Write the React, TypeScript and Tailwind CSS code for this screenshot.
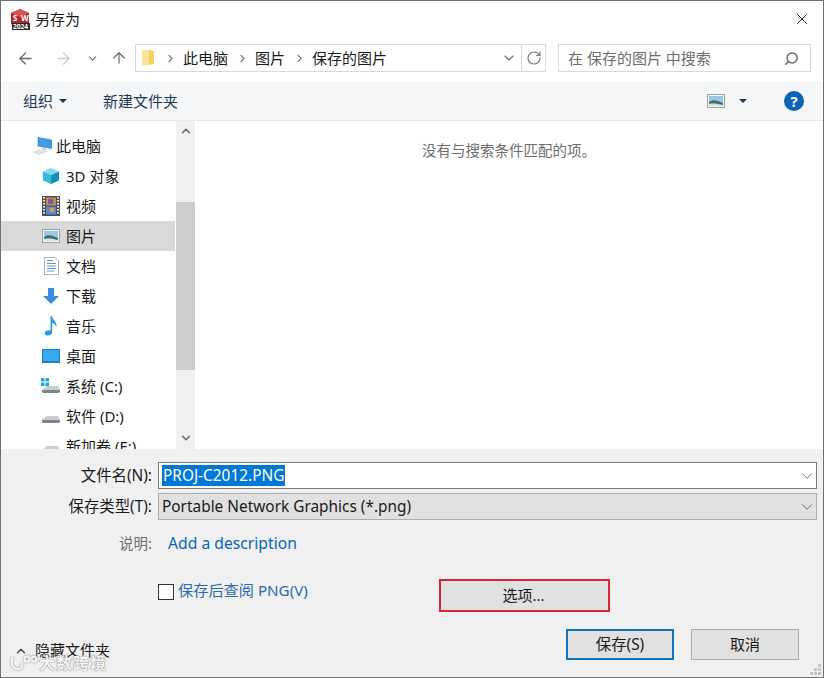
import { ArrowLeft, ArrowRight, ArrowUp, ChevronDown, ChevronRight, ChevronUp, RotateCw, Search, X } from "lucide-react";
import type { ReactNode } from "react";

const font = { fontFamily: '"Noto Sans", "Noto Sans CJK SC", sans-serif' };

function PictureIcon({ w = 18, h = 14 }: { w?: number; h?: number }) {
  return (
    <svg width={w} height={h} viewBox="0 0 18 14">
      <rect x="0.5" y="0.5" width="17" height="13" fill="#f4f6f6" stroke="#9aa3a8" />
      <rect x="2" y="2" width="14" height="10" fill="#9cc7e4" />
      <path d="M2 8 C6 5 10 6 16 9 V12 H2 Z" fill="#3f6f72" />
      <path d="M2 10 C7 9 11 10 16 11 V12 H2 Z" fill="#d5e2de" />
    </svg>
  );
}

function NavIcon({ name }: { name: string }) {
  switch (name) {
    case "pc":
      return (
        <svg width="20" height="18" viewBox="0 0 20 18">
          <path d="M6 0.5 L19.5 3 V11.5 L6 9 Z" fill="#3f9fe0" stroke="#2b7fc0" strokeWidth="0.7" />
          <path d="M10 10 L14 11 L14 13 L10 12 Z" fill="#b8c6d0" />
          <path d="M0 15 L9 12 L16 14 L7 18 Z" fill="#dfe3e6" />
        </svg>
      );
    case "3d":
      return (
        <svg width="18" height="18" viewBox="0 0 20 20">
          <path d="M10 1 L19 5 L10 9 L1 5 Z" fill="#7fdcec" />
          <path d="M1 5 L10 9 V19 L1 15 Z" fill="#37bcd6" />
          <path d="M19 5 L10 9 V19 L19 15 Z" fill="#1493b8" />
        </svg>
      );
    case "video":
      return (
        <svg width="18" height="20" viewBox="0 0 18 20">
          <rect x="0" y="0" width="18" height="20" fill="#4a4f55" />
          <rect x="4" y="1.5" width="10" height="8" fill="#c98a4e" />
          <rect x="6" y="3" width="5" height="5" fill="#7a5aa0" />
          <rect x="4" y="10.5" width="10" height="8" fill="#5a8ad0" />
          <rect x="8" y="12" width="4" height="4" fill="#c9a04e" />
          {[1, 4, 7, 10, 13, 16].map((y) => (
            <g key={y}>
              <rect x="1" y={y} width="2" height="1.6" fill="#e8e8e8" />
              <rect x="15" y={y} width="2" height="1.6" fill="#e8e8e8" />
            </g>
          ))}
        </svg>
      );
    case "pic":
      return <PictureIcon />;
    case "doc":
      return (
        <svg width="15" height="18" viewBox="0 0 15 18">
          <path d="M0.5 0.5 H11 L14.5 4 V17.5 H0.5 Z" fill="#fff" stroke="#a9b1b8" />
          <path d="M3 3.5 H9 M3 6.5 H12 M3 9 H12 M3 11.5 H12 M3 14 H10" stroke="#5f9dc8" strokeWidth="1.2" />
        </svg>
      );
    case "down":
      return (
        <svg width="18" height="18" viewBox="0 0 18 18">
          <path d="M6 1 H12 V9 H17 L9 17 L1 9 H6 Z" fill="#3a8fdc" />
        </svg>
      );
    case "music":
      return (
        <svg width="14" height="20" viewBox="0 0 14 20">
          <path d="M6.5 0 H8 C8.5 4 13 5 12.5 11 C11.5 8.5 10 7.5 8.2 7 V16 C8.2 18.5 5.5 20 3 19.5 C0.5 19 0 16.5 2 15 C3.5 14 5.5 14 6.5 14.5 Z" fill="#2a9ae8" />
        </svg>
      );
    case "desk":
      return (
        <svg width="18" height="14" viewBox="0 0 18 14">
          <rect width="18" height="14" fill="#1b7fd0" />
          <rect x="1" y="1" width="16" height="11" fill="#38a9f0" />
        </svg>
      );
    default:
      return (
        <svg width="20" height="16" viewBox="0 0 20 16">
          {name === "c" && (
            <g fill="#20a8d8">
              <rect x="0" y="0" width="3.5" height="3.5" />
              <rect x="4.5" y="0" width="3.5" height="3.5" />
              <rect x="0" y="4.5" width="3.5" height="3.5" />
              <rect x="4.5" y="4.5" width="3.5" height="3.5" />
            </g>
          )}
          <path d="M1 12 L6 8 H17 L19 12 V14 L17 15 H2 L1 14 Z" fill="#c9cdd1" />
          <path d="M1 12 H19 V14 L17 15 H2 L1 14 Z" fill="#7d8388" />
        </svg>
      );
  }
}

function NavItem({ icon, label, active, pc }: { icon: string; label: string; active?: boolean; pc?: boolean }) {
  return (
    <div className={`mr-[1px] flex h-[30px] shrink-0 items-center ${active ? "bg-[#d9d9d9]" : ""} ${pc ? "pl-[31px]" : "pl-[40px]"}`}>
      <div className="flex w-[20px] items-center justify-center">
        <NavIcon name={icon} />
      </div>
      <span className={`whitespace-nowrap text-[15px] leading-none text-[#1a1a1a] ${pc ? "ml-[4px]" : "ml-[5px]"}`}>{label}</span>
    </div>
  );
}

function Row({ label, children, muted }: { label: string; children: ReactNode; muted?: boolean }) {
  return (
    <div className="flex items-center">
      <div className={`w-[153px] whitespace-nowrap pr-[2px] text-right leading-none ${muted ? "text-[14.5px] text-[#6d6d6d]" : "text-[15.4px] text-[#1a1a1a]"}`}>{label}</div>
      {children}
    </div>
  );
}

export default function App() {
  return (
    <div style={font} className="flex h-[678px] w-[824px] flex-col overflow-hidden border border-[#6f6f6f] bg-white">
      {/* title bar */}
      <div className="flex h-[36px] shrink-0 items-center pl-[9px] pr-[12px]">
        <svg width="20" height="21" viewBox="0 0 20 21">
          <path d="M1 4 L10 0 L19 4 V15 L10 19 L1 15 Z" fill="#b3282d" />
          <path d="M1 4 L10 8 L19 4 L10 0 Z" fill="#d9534f" />
          <rect x="2" y="14" width="18" height="7" fill="#2b2b2b" />
          <text x="3" y="12" fontSize="8" fontWeight="700" fill="#fff">S</text>
          <text x="11" y="12" fontSize="8" fontWeight="700" fill="#fff">W</text>
          <text x="3" y="20" fontSize="6.5" fontWeight="700" fill="#fff">2024</text>
        </svg>
        <span className="ml-[5px] text-[15px] leading-none text-[#1a1a1a]">另存为</span>
        <X className="ml-auto" size={18} strokeWidth={1.2} color="#111" />
      </div>

      {/* nav bar */}
      <div className="flex h-[45px] shrink-0 items-center pb-[3px] pl-[15px]">
        <ArrowLeft size={19} strokeWidth={1.6} color="#6b6b6b" />
        <ArrowRight size={19} strokeWidth={1.6} color="#cfcfcf" className="ml-[19px]" />
        <ChevronDown size={13} strokeWidth={2} color="#6b6b6b" className="ml-[13px]" />
        <ArrowUp size={18} strokeWidth={1.6} color="#6b6b6b" className="ml-[11px]" />
        <div className="ml-[7px] flex h-[28px] w-[411px] items-center border border-[#d9d9d9]">
          <svg width="14" height="18" viewBox="0 0 14 18" className="ml-[5px]">
            <path d="M1 1 H8 V16 L1 17 Z" fill="#fbe39b" />
            <path d="M8 1 L13 2 V15 L8 16 Z" fill="#f7cf63" />
          </svg>
          <ChevronRight size={13} strokeWidth={2} color="#7a7a7a" className="ml-[9px]" />
          <span className="ml-[6px] text-[15px] leading-none text-[#1a1a1a]">此电脑</span>
          <ChevronRight size={13} strokeWidth={2} color="#7a7a7a" className="ml-[8px]" />
          <span className="ml-[6px] text-[15px] leading-none text-[#1a1a1a]">图片</span>
          <ChevronRight size={13} strokeWidth={2} color="#7a7a7a" className="ml-[8px]" />
          <span className="ml-[6px] text-[15px] leading-none text-[#1a1a1a]">保存的图片</span>
          <div className="ml-auto flex h-full items-center">
            <ChevronDown size={16} strokeWidth={1.6} color="#6b6b6b" className="mr-[4px]" />
            <div className="flex h-full w-[24px] items-center justify-center border-l border-[#d9d9d9]">
              <RotateCw size={16} strokeWidth={1.8} color="#7a7a7a" />
            </div>
          </div>
        </div>
        <div className="ml-[12px] flex h-[28px] w-[253px] items-center border border-[#d9d9d9] pl-[9px] pr-[11px]">
          <span className="text-[15px] leading-none text-[#6d6d6d]">在 保存的图片 中搜索</span>
          <Search size={15} strokeWidth={2.4} color="#6b6b6b" className="ml-auto -scale-x-100" />
        </div>
      </div>

      {/* command bar */}
      <div className="flex h-[39px] shrink-0 items-center border-b border-[#e6e8ea] bg-[#f5f6f7] pl-[22px]">
        <span className="text-[15px] leading-none text-[#1e3a5a]">组织</span>
        <div className="ml-[6px] h-0 w-0 border-x-[4px] border-t-[4px] border-x-transparent border-t-[#1e3a5a]" />
        <span className="ml-[36px] text-[15px] leading-none text-[#1e3a5a]">新建文件夹</span>
        <div className="ml-auto flex items-center">
          <PictureIcon />
          <div className="ml-[14px] h-0 w-0 border-x-[4px] border-t-[4px] border-x-transparent border-t-[#1e3a5a]" />
          <div className="ml-[37px] mr-[19px] flex h-[20px] w-[20px] items-center justify-center rounded-full bg-[#0a63b8] text-[15px] font-bold leading-none text-white">?</div>
        </div>
      </div>

      {/* main area */}
      <div className="flex h-[328px] shrink-0">
        <div className="flex w-[175px] shrink-0 flex-col overflow-hidden pt-[10px]">
          <NavItem icon="pc" label="此电脑" pc />
          <NavItem icon="3d" label="3D 对象" />
          <NavItem icon="video" label="视频" />
          <NavItem icon="pic" label="图片" active />
          <NavItem icon="doc" label="文档" />
          <NavItem icon="down" label="下载" />
          <NavItem icon="music" label="音乐" />
          <NavItem icon="desk" label="桌面" />
          <NavItem icon="c" label="系统 (C:)" />
          <NavItem icon="d" label="软件 (D:)" />
          <NavItem icon="e" label="新加卷 (E:)" />
        </div>
        <div className="flex w-[19px] shrink-0 flex-col items-center bg-[#f0f0f0]">
          <div className="flex h-[20px] w-full items-center justify-center">
            <ChevronUp size={14} strokeWidth={2.4} color="#606060" />
          </div>
          <div className="mt-[61px] h-[168px] w-full bg-[#cdcdcd]" />
          <div className="mt-auto flex h-[22px] w-full items-center justify-center">
            <ChevronDown size={14} strokeWidth={2.4} color="#606060" />
          </div>
        </div>
        <div className="flex-1 pt-[20px] text-center text-[14.5px] leading-[18px] text-[#6d6d6d]">没有与搜索条件匹配的项。</div>
      </div>

      {/* bottom panel */}
      <div className="relative flex min-h-0 flex-1 flex-col bg-[#f0f0f0] pt-[13px]">
        <Row label="文件名(N):">
          <div className="ml-[4px] flex h-[27px] w-[659px] items-center border border-[#7a7a7a] bg-white pl-[3px]">
            <span className="bg-[#0078d7] px-[1px] text-[15.4px] leading-[21px] text-white">PROJ-C2012.PNG</span>
            <ChevronDown size={18} strokeWidth={1} color="#444" className="ml-auto" />
          </div>
        </Row>
        <div className="mt-[4px]">
          <Row label="保存类型(T):">
            <div className="ml-[4px] flex h-[27px] w-[659px] items-center border border-[#adadad] bg-[#e1e1e1] pl-[3px]">
              <span className="text-[15.4px] leading-none text-[#1a1a1a]">Portable Network Graphics (*.png)</span>
              <ChevronDown size={18} strokeWidth={1} color="#444" className="ml-auto" />
            </div>
          </Row>
        </div>
        <div className="mt-[14px]">
          <Row label="说明:" muted>
            <span className="ml-[14px] text-[15.7px] leading-[18px] text-[#0a66b8]">Add a description</span>
          </Row>
        </div>
        <div className="ml-[157px] mt-[27px] flex h-[34px] items-start">
          <div className="mt-[4px] flex w-[281px] items-center">
            <div className="h-[16px] w-[16px] border border-[#333] bg-white" />
            <span className="ml-[4px] pb-[2px] text-[15.2px] leading-none text-[#2a6ab0]">保存后查阅 PNG(V)</span>
          </div>
          <button className="h-[33px] w-[171px] border-2 border-[#d92632] bg-[#e1e1e1] pr-[2px] text-[15px] leading-none text-[#1a1a1a]">选项...</button>
        </div>
        <div className="mt-[16px] flex items-start pl-[565px]">
          <button className="h-[31px] w-[108px] border-2 border-[#0a72c4] bg-[#e1e1e1] text-[15.4px] leading-none text-[#1a1a1a]">保存(S)</button>
          <button className="ml-[17px] h-[31px] w-[108px] border border-[#adadad] bg-[#e1e1e1] text-[15px] leading-none text-[#1a1a1a]">取消</button>
        </div>

        {/* hide folders, overlaps the bottom edge */}
        <div className="absolute bottom-[19px] left-[13px] flex items-center">
          <ChevronUp size={14} strokeWidth={2.4} color="#444" />
          <span className="ml-[7px] text-[15px] leading-none text-[#1a1a1a]">隐藏文件夹</span>
        </div>
        <div className="absolute bottom-[5px] left-[8px] flex items-center">
          <svg width="30" height="18" viewBox="0 0 30 18" fill="none" stroke="#f7f7f7" strokeWidth="2" className="[filter:drop-shadow(0_0_1px_#888)]">
            <path d="M4 3 C1 8 3 15 9 15 C13 15 14 12 13 9" />
            <circle cx="18" cy="5" r="2.5" />
            <circle cx="25" cy="5" r="2.5" />
          </svg>
          <span className="text-[16px] font-bold leading-none tracking-[1px] text-[#f7f7f7] [text-shadow:0_0_1px_#777,0_0_1px_#777]">大数跨境</span>
        </div>
        <svg width="12" height="12" viewBox="0 0 12 12" fill="#c4c4c4" className="absolute bottom-[1px] right-[1px]">
          <rect x="8" y="0" width="3" height="3" />
          <rect x="4" y="4" width="3" height="3" />
          <rect x="8" y="4" width="3" height="3" />
          <rect x="0" y="8" width="3" height="3" />
          <rect x="4" y="8" width="3" height="3" />
          <rect x="8" y="8" width="3" height="3" />
        </svg>
      </div>
    </div>
  );
}
